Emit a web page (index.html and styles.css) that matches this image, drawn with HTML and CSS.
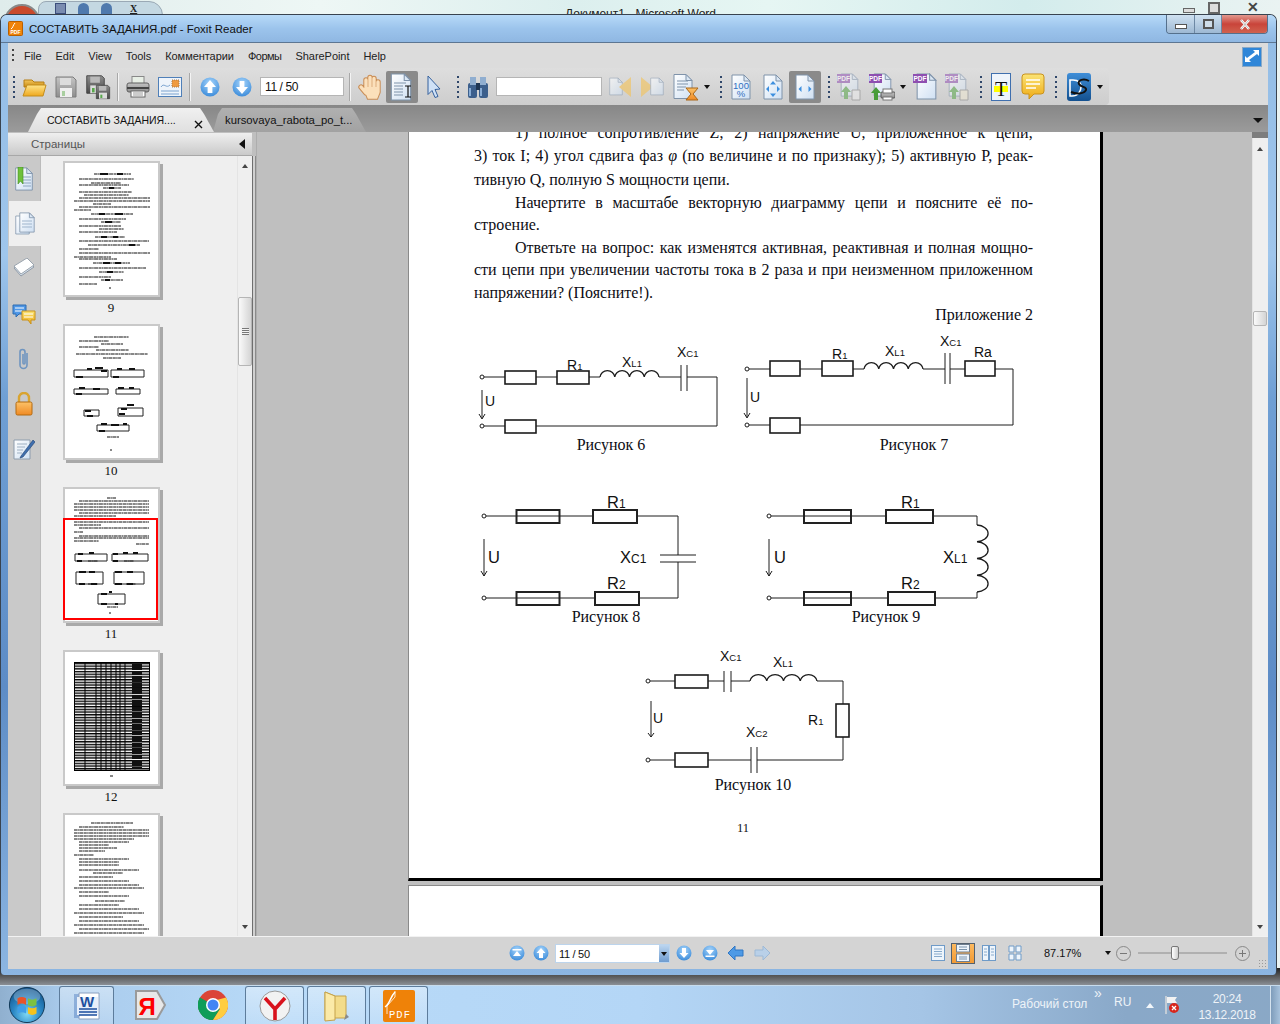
FILE: index.html
```html
<!DOCTYPE html>
<html lang="ru">
<head>
<meta charset="utf-8">
<title>Foxit Reader</title>
<link rel="stylesheet" href="styles.css">
</head>
<body>
<svg class="defs" width="0" height="0">
  <defs>
    <linearGradient id="gFold" x1="0" y1="0" x2="0" y2="1"><stop offset="0" stop-color="#ffe58a"/><stop offset="1" stop-color="#eea81e"/></linearGradient>
    <linearGradient id="gFoldB" x1="0" y1="0" x2="0" y2="1"><stop offset="0" stop-color="#f3c65a"/><stop offset="1" stop-color="#c98a12"/></linearGradient>
    <radialGradient id="gBlue" cx=".5" cy=".3" r=".8"><stop offset="0" stop-color="#a5d4fb"/><stop offset="1" stop-color="#2f83d6"/></radialGradient>
    <linearGradient id="gPage" x1="0" y1="0" x2="1" y2="1"><stop offset="0" stop-color="#fff"/><stop offset="1" stop-color="#cfe0f3"/></linearGradient>
    <linearGradient id="gGray" x1="0" y1="0" x2="0" y2="1"><stop offset="0" stop-color="#c4c4c4"/><stop offset="1" stop-color="#8e8e8e"/></linearGradient>
    <linearGradient id="gDark" x1="0" y1="0" x2="0" y2="1"><stop offset="0" stop-color="#8c8c8c"/><stop offset="1" stop-color="#4a4a4a"/></linearGradient>
    <linearGradient id="gYel" x1="0" y1="0" x2="0" y2="1"><stop offset="0" stop-color="#fbe476"/><stop offset="1" stop-color="#eea914"/></linearGradient>
    <linearGradient id="gOrange" x1="0" y1="0" x2="0" y2="1"><stop offset="0" stop-color="#fcc268"/><stop offset="1" stop-color="#f08a24"/></linearGradient>
    <radialGradient id="gOrb" cx=".5" cy=".75" r=".8"><stop offset="0" stop-color="#7fd9f5"/><stop offset=".5" stop-color="#2a86c4"/><stop offset="1" stop-color="#104a80"/></radialGradient>
    <linearGradient id="gDs" x1="0" y1="0" x2="0" y2="1"><stop offset="0" stop-color="#3f8ed8"/><stop offset="1" stop-color="#13508f"/></linearGradient>
    <pattern id="rows" width="76" height="2.7" patternUnits="userSpaceOnUse"><rect width="76" height="1.4" fill="#000"/></pattern>
    <symbol id="pg" viewBox="0 0 20 26"><path d="M1 1h12l6 6v18H1z" fill="url(#gPage)" stroke="#7f93aa"/><path d="M13 1v6h6z" fill="#dbe7f4" stroke="#7f93aa"/></symbol>
    <symbol id="floppy" viewBox="0 0 24 24"><path d="M2 2h17l3 3v17H2z" fill="url(#gGray)" stroke="#7c7c7c"/><rect x="6" y="3" width="11" height="7" fill="#dcdcdc"/><rect x="6" y="13" width="12" height="9" fill="#efefef"/><rect x="8" y="16" width="3" height="5" fill="#a9cfa0"/></symbol>
    <symbol id="floppyD" viewBox="0 0 24 24"><path d="M2 2h17l3 3v17H2z" fill="url(#gDark)" stroke="#3c3c3c"/><rect x="6" y="3" width="11" height="7" fill="#b9b9b9"/><rect x="6" y="13" width="12" height="9" fill="#dcdcdc"/><rect x="8" y="16" width="3" height="5" fill="#58a84c"/></symbol>
  </defs>
</svg>

<div class="desk">
  <div class="word-qat">
    <span class="qat-ico qat-save"></span><span class="qat-ico qat-undo"></span><span class="qat-ico qat-redo"></span><span class="qat-x">X</span>
  </div>
  <div class="word-title">Документ1 - Microsoft Word</div>
  <div class="word-ctl"><span class="wc-min"></span><span class="wc-max"></span><span class="wc-x">✕</span></div>
  <div class="word-orb"></div>
  <div class="word-status"></div>
</div>

<div class="win">
  <div class="titlebar">
    <svg class="app-ico" width="15" height="15" viewBox="0 0 15 15"><rect x=".5" y=".5" width="14" height="14" rx="1" fill="#ef8208" stroke="#b85f00"/><path d="M3 8c2-1 2-4 4-6" stroke="#fff" fill="none"/><text class="pdf-mini" x="7.5" y="12.5">PDF</text></svg>
    <span class="title-text">СОСТАВИТЬ ЗАДАНИЯ.pdf - Foxit Reader</span>
    <div class="caption">
      <span class="cap cap-min"><i></i></span>
      <span class="cap cap-max"><i></i></span>
      <span class="cap cap-close">
        <svg width="12" height="11" viewBox="0 0 12 11"><path d="M2 1l8 9M10 1l-8 9" stroke="#fff" stroke-width="2.6"/><path d="M2 1l8 9M10 1l-8 9" stroke="#555" stroke-width=".4"/></svg>
      </span>
    </div>
  </div>

  <div class="menubar">
    <span class="menu-grip"></span>
    <span>File</span><span>Edit</span><span>View</span><span>Tools</span><span>Комментарии</span><span class="m-tight">Формы</span><span>SharePoint</span><span>Help</span>
    <svg class="expand" width="20" height="20" viewBox="0 0 20 20"><rect x=".5" y=".5" width="19" height="19" fill="#2f86d8" stroke="#8aa9c6"/><path d="M11 3h6v6l-2-2-8 6 2 2H3v-6l2 2 8-6z" fill="#fff"/></svg>
  </div>

  <div class="toolbar-row">
    <div class="toolbar">
      <span class="grip grip-first"></span>
      <span class="tb"><svg width="25" height="24" viewBox="0 0 25 24"><path d="M2 5h8l2 2h10v5H2z" fill="url(#gFoldB)" stroke="#b67e14"/><path d="M5 10h19l-3 11H1z" fill="url(#gFold)" stroke="#c48d1c"/></svg></span>
      <span class="tb"><svg width="24" height="24"><use href="#floppy"/></svg></span>
      <span class="tb"><svg width="26" height="26" viewBox="0 0 26 26"><use href="#floppyD" width="21" height="21"/><g transform="translate(10 10)"><use href="#floppyD" width="16" height="16"/></g></svg></span>
      <span class="sep"></span>
      <span class="tb"><svg width="24" height="24" viewBox="0 0 24 24"><rect x="6" y="1.5" width="12" height="8" fill="#e8efe6" stroke="#888"/><rect x="1" y="8" width="22" height="9" rx="2" fill="url(#gGray)" stroke="#5e5e5e"/><rect x="1" y="12" width="22" height="2" fill="#444"/><rect x="5" y="16" width="14" height="6" fill="#fff" stroke="#666"/><path d="M7 18h10M7 20h10" stroke="#999"/></svg></span>
      <span class="tb"><svg width="24" height="20" viewBox="0 0 24 20"><rect x=".5" y=".5" width="23" height="19" fill="#eef4fb" stroke="#4f7fb8"/><rect x="14" y="3" width="7" height="7" fill="#ef9a40" stroke="#a97a4a" stroke-dasharray="1 1"/><path d="M3 10c3-5 5 2 9-2M3 14h18M3 17h18" stroke="#7aa3d0" fill="none"/></svg></span>
      <span class="sep"></span>
      <span class="tb"><svg width="20" height="20" viewBox="0 0 20 20"><circle cx="10" cy="10" r="9.5" fill="url(#gBlue)"/><path d="M10 3l6 7h-3.6v6H7.6v-6H4z" fill="#fff"/></svg></span>
      <span class="tb"><svg width="20" height="20" viewBox="0 0 20 20"><circle cx="10" cy="10" r="9.5" fill="url(#gBlue)"/><path d="M10 17l-6-7h3.6V4h4.8v6H16z" fill="#fff"/></svg></span>
      <span class="page-input tb-input">11 / 50</span>
      <span class="sep"></span>
      <span class="tb"><svg width="24" height="26" viewBox="0 0 24 26"><g fill="none" stroke-linecap="round"><g stroke="#c98d55" stroke-width="5.4"><path d="M3 13l5 6M8 18V6M12 17V3.5M16 17V4.5M20 18V8M9 18l2 5h7l2-5"/></g><g stroke="#fbe0bb" stroke-width="3.4"><path d="M3 13l5 6M8 18V6M12 17V3.5M16 17V4.5M20 18V8M9 18l2 5h7l2-5"/></g></g><path d="M8 13h12v8l-3 3h-6l-3-4z" fill="#fbe0bb"/></svg></span>
      <span class="tb tb-on"><svg width="24" height="28" viewBox="0 0 24 28"><use href="#pg" width="22" height="28"/><path d="M4 10h12M4 13h9M4 16h9M4 19h9M4 22h9" stroke="#7f93aa"/><path d="M15 13h6M15 24h6M18 13v11" stroke="#111" stroke-width="1.2"/></svg></span>
      <span class="tb"><svg width="18" height="24" viewBox="0 0 18 24"><path d="M3 1l12 13-5 .5 3 7-3 1-3-7-4 4z" fill="#cfe1f6" stroke="#35609c"/></svg></span>
      <span class="grip"></span>
      <span class="tb"><svg width="24" height="24" viewBox="0 0 24 24"><rect x="2" y="8" width="9" height="15" rx="2" fill="#3c5f8c"/><rect x="13" y="8" width="9" height="15" rx="2" fill="#3c5f8c"/><rect x="4" y="2" width="6" height="8" fill="#90aed0"/><rect x="14" y="2" width="6" height="8" fill="#90aed0"/><rect x="10" y="8" width="4" height="7" fill="#1e3553"/><path d="M4 13v8M15 13v8" stroke="#9cc0e8" stroke-width="1.6"/></svg></span>
      <span class="search-input tb-input"></span>
      <span class="tb tb-l"><svg class="faded" width="24" height="22" viewBox="0 0 24 22"><use href="#pg" x="1" y="1" width="14" height="19"/><path d="M23 1v20L11 11z" fill="#f4c35a"/></svg></span>
      <span class="tb"><svg class="faded" width="24" height="22" viewBox="0 0 24 22"><path d="M1 1v20l12-10z" fill="#f4c35a"/><use href="#pg" x="10" y="1" width="14" height="19"/></svg></span>
      <span class="tb tb-l"><svg width="26" height="28" viewBox="0 0 26 28"><use href="#pg" width="20" height="27"/><path d="M4 8h11M4 11h11M4 14h9M4 17h7" stroke="#7f93aa"/><path d="M13 15h12l-5 6 5 6H13l5-6z" fill="url(#gOrange)" stroke="#a96618"/></svg></span>
      <span class="drop"></span>
      <span class="grip"></span>
      <span class="tb"><svg width="20" height="26" viewBox="0 0 20 26"><use href="#pg" width="20" height="26"/><text class="ico-num" x="10" y="14.5">100</text><text class="ico-num" x="10" y="23">%</text></svg></span>
      <span class="tb"><svg width="20" height="26" viewBox="0 0 20 26"><use href="#pg" width="20" height="26"/><path d="M10 7l3 3.5H7zM10 23l3-3.5H7zM3 15l3-3v6zM17 15l-3-3v6z" fill="#3d8fdf"/></svg></span>
      <span class="tb tb-on"><svg width="20" height="26" viewBox="0 0 20 26"><use href="#pg" width="20" height="26"/><path d="M3.5 15l3-3v6zM16.500 15l-3-3v6z" fill="#3d8fdf"/></svg></span>
      <span class="grip"></span>
      <span class="tb"><svg class="faded2" width="24" height="28" viewBox="0 0 24 28"><use href="#pg" x="3" width="19" height="24"/><rect y="1" width="13" height="9" fill="#8e4fb0"/><text class="pdf-tag" x="6.500" y="8">PDF</text><path d="M9 13l5 6h-3v7H7v-7H4z" fill="#58a64a"/><path d="M15 17h8v10h-8z" fill="#eee" stroke="#888"/></svg></span>
      <span class="tb tb-s"><svg width="26" height="28" viewBox="0 0 26 28"><use href="#pg" x="4" width="19" height="24"/><rect y="1" width="13" height="9" fill="#8e4fb0"/><text class="pdf-tag" x="6.500" y="8">PDF</text><path d="M7 14l5 6H9v7H5v-7H2z" fill="#4a9c3a"/><rect x="12" y="19" width="14" height="6" rx="1" fill="url(#gGray)" stroke="#555"/><rect x="14" y="16" width="9" height="4" fill="#fff" stroke="#777"/><rect x="14" y="24" width="9" height="3" fill="#fff" stroke="#777"/></svg></span>
      <span class="drop"></span>
      <span class="tb"><svg width="24" height="28" viewBox="0 0 24 28"><use href="#pg" x="3" width="21" height="27"/><rect y="1" width="14" height="9" fill="#8e4fb0"/><text class="pdf-tag" x="7" y="8">PDF</text></svg></span>
      <span class="tb"><svg class="faded2" width="24" height="28" viewBox="0 0 24 28"><use href="#pg" x="3" width="19" height="24"/><rect y="1" width="13" height="9" fill="#8e4fb0"/><text class="pdf-tag" x="6.500" y="8">PDF</text><path d="M9 13l5 6h-3v7H7v-7H4z" fill="#58a64a"/><path d="M15 17h8v10h-8z" fill="#efe8d2" stroke="#888"/></svg></span>
      <span class="grip"></span>
      <span class="tb"><svg width="20" height="28" viewBox="0 0 20 28"><rect x=".5" y=".5" width="19" height="27" fill="#eef4fb" stroke="#3f6fae"/><rect x="3" y="13" width="14" height="6" fill="#ffff00"/><text class="ico-t" x="10" y="23">T</text></svg></span>
      <span class="tb"><svg width="24" height="27" viewBox="0 0 24 27"><path d="M4 1h16a3 3 0 0 1 3 3v14a3 3 0 0 1-3 3h-7l-5 5v-5H4a3 3 0 0 1-3-3V4a3 3 0 0 1 3-3z" fill="url(#gYel)" stroke="#c9921c"/><path d="M5 7h14M5 11h14M5 15h10" stroke="#fff" stroke-width="1.3"/></svg></span>
      <span class="grip grip-ds"></span>
      <span class="tb tb-ds"><svg width="24" height="28" viewBox="0 0 24 28"><rect width="24" height="28" rx="3" fill="url(#gDs)"/><path d="M3 7h3c6 0 8 3 8 7s-3 9-9 9H3z" fill="none" stroke="#fff" stroke-width="1.6"/><path d="M22 8c-5-3-12-1-10 3s8 2 7 6c-1 3-8 5-15 2" fill="none" stroke="#111" stroke-width="2"/></svg></span>
      <span class="drop"></span>
    </div>
  </div>

  <div class="tabstrip">
    <div class="tab tab-on"><span class="tab-label">СОСТАВИТЬ ЗАДАНИЯ....</span><svg class="tab-x" width="9" height="9" viewBox="0 0 9 9"><path d="M1 1l7 7M8 1L1 8" stroke="#111" stroke-width="1.4"/></svg></div>
    <div class="tab tab-off"><span class="tab-label">kursovaya_rabota_po_t...</span></div>
    <span class="tab-drop"></span>
  </div>

  <div class="content">
    <aside class="sidebar">
      <div class="side-head"><span class="side-title">Страницы</span><span class="tri-left"></span></div>
      <div class="side-body">
        <div class="rail">
          <div class="rail-item"><svg width="20" height="24" viewBox="0 0 20 24"><use href="#pg" width="20" height="24"/><path d="M9 10h8M9 13h8M9 16h8M9 19h8" stroke="#8fa6c0"/><path d="M4 0h5v17l-2.500-3L4 17z" fill="#6fc03c" stroke="#3f8a20" stroke-width=".6"/></svg></div>
          <div class="rail-item rail-on"><svg width="20" height="24" viewBox="0 0 20 24"><use href="#pg" y="3" width="15" height="20"/><use href="#pg" x="4" width="16" height="21"/><path d="M7 9h10M7 12h10M7 15h10" stroke="#9fb5cc"/></svg></div>
          <div class="rail-item"><svg width="22" height="22" viewBox="0 0 22 22"><path d="M1 10l13-8 7 7-13 9z" fill="#d8e4ef" stroke="#909aa6"/><path d="M1 8l13-8 7 7-13 9z" fill="#fff" stroke="#9aa4ae"/></svg></div>
          <div class="rail-item"><svg width="24" height="22" viewBox="0 0 24 22"><path d="M1 2h13v9H7l-3 3v-3H1z" fill="#4f97e6" stroke="#2e6cb0"/><path d="M3 5h9M3 8h7" stroke="#fff"/><path d="M10 8h13v9h-4v4l-3-4h-6z" fill="url(#gYel)" stroke="#c9921c"/><path d="M12 11h9M12 14h9" stroke="#fff"/></svg></div>
          <div class="rail-item"><svg width="14" height="24" viewBox="0 0 14 24"><path d="M10 6v12a3.500 3.500 0 0 1-7 0V5a2.500 2.500 0 0 1 5 0v11a1 1 0 0 1-2 0V7" fill="none" stroke="#6f95c0" stroke-width="1.6"/></svg></div>
          <div class="rail-item"><svg width="18" height="24" viewBox="0 0 18 24"><path d="M4 10V6a5 5 0 0 1 10 0v4" fill="none" stroke="#d9a430" stroke-width="2.400"/><rect x="1" y="10" width="16" height="13" rx="1.500" fill="url(#gOrange)" stroke="#b36a10"/></svg></div>
          <div class="rail-item"><svg width="22" height="23" viewBox="0 0 22 23"><path d="M1 3h16v19H1z" fill="url(#gPage)" stroke="#8d9cad"/><path d="M4 7h10M4 10h8M4 13h6M4 16h5" stroke="#9fb0c2"/><path d="M8 19L20 3l2 2-12 15-3 1z" fill="#3f6fae" stroke="#1f3f70" stroke-width=".6"/></svg></div>
        </div>
        <div class="thumbs">
          <div class="thumb-wrap">
            <div class="thumb"><svg class="thumb-art" viewBox="0 0 93 132"><path class="tl" d="M29 11h37M14 16h55M26 20h30M14 22h50M38 25h18M14 29h53M19 32h45M14 35h71M9 38h76M28 41h18M14 44h71M9 47h17M26 51h42M14 56h47M36 59h20M14 63h42M34 66h25M14 69h38M30 74h30M14 78h70M23 82h52M14 86h20M14 90h71M9 94h37M14 96h38M28 100h37M14 105h67M34 109h25M14 114h32M36 117h22M14 121h18M44 125h2"/><path class="th" d="M35 11h8M52 11h6M44 25h5M34 51h6M50 51h8M40 59h7M36 74h6M48 74h5M64 82h6M38 100h7M50 100h6M42 109h6M40 117h5"/></svg></div>
            <div class="thumb-no">9</div>
          </div>
          <div class="thumb-wrap">
            <div class="thumb"><svg class="thumb-art" viewBox="0 0 93 132"><path class="tl" d="M29 11h35M14 15h30M36 18h22M14 21h20M31 24h33M11 28h72M38 32h18M42 111h12M45 124h2"/><path class="tc" d="M9 44h34v7H9zM46 44h33v7H46zM9 63h34v5H9zM51 63h24v5H51zM19 84h15v6H19zM53 82h25v8H53zM32 99h32v6H32z"/><path class="th" d="M11 51h7M22 43h5M30 42h8M36 45h6M48 51h6M52 43h5M64 43h6M11 68h6M14 62h6M28 63h7M53 62h6M64 62h5M20 85h6M22 90h6M54 88h6M62 79h7M56 83h6M34 105h6M36 98h6M46 99h8M58 98h4"/></svg></div>
            <div class="thumb-no">10</div>
          </div>
          <div class="thumb-wrap">
            <div class="thumb"><svg class="thumb-art" viewBox="0 0 93 132"><path class="tl" d="M42 9h9M14 12h70M9 15h75M9 18h75M9 21h75M14 24h70M9 27h42M9 33h75M9 36h27M14 39h70M9 43h9M14 47h70M9 49h75M9 52h25M71 55h13M23 72h10M59 72h10M23 95h10M61 95h10M42 118h11M44 124h2"/><path class="tc" d="M10 65h32v7H10zM47 65h36v7H47zM11 83h27v12H11zM49 83h30v12H49zM33 105h27v10H33z"/><path class="th" d="M13 65h5M24 64h5M12 72h5M48 65h5M58 64h5M68 64h5M48 72h5M14 83h7M24 83h6M14 95h6M26 95h6M50 83h7M62 83h6M50 95h7M62 95h6M36 105h6M44 103h3M36 115h6M50 115h3"/></svg></div>
            <div class="marker"></div>
            <div class="thumb-no">11</div>
          </div>
          <div class="thumb-wrap">
            <div class="thumb"><svg class="thumb-art" viewBox="0 0 93 132"><rect x="9" y="10" width="76" height="109" fill="url(#rows)"/><rect x="9.500" y="10.500" width="75" height="108" class="tb-grid"/><path class="tb-grid" d="M20 10v109M31 10v109M36 10v109M41 10v109M46 10v109M51 10v109M55 10v109M60 10v109"/><path class="tb-blk" d="M72 12v105"/><path class="tl" d="M45 124h3"/></svg></div>
            <div class="thumb-no">12</div>
          </div>
          <div class="thumb-wrap">
            <div class="thumb"><svg class="thumb-art" viewBox="0 0 93 132"><path class="tl" d="M26 8h42M14 12h45M9 15h75M9 18h75M9 21h75M9 24h60M14 27h50M14 30h30M14 33h38M14 36h26M9 40h20M14 44h50M14 47h40M14 50h40M14 55h60M28 58h30M14 62h34M14 66h50M14 70h60M9 73h70M14 77h30M14 81h50M30 86h30M14 90h40M14 94h60M9 98h70M14 102h44M14 106h60M9 110h70M14 114h70M9 118h70"/></svg></div>
          </div>
        </div>
        <div class="sc side-sc">
          <span class="ar-up"></span>
          <span class="sc-thumb sc-thumb-side"><i></i></span>
          <span class="ar-dn"></span>
        </div>
        <div class="side-edge"></div>
      </div>
    </aside>

    <main class="doc">
      <article class="page">
        <div class="textblock">
          <div class="ln ln-in">1) полное сопротивление Z; 2) напряжение U, приложенное к цепи;</div>
          <div class="ln">3) ток I; 4) угол сдвига фаз <em>φ</em> (по величине и по признаку); 5) активную P, реак-</div>
          <div class="ln ln-last ln-gap">тивную Q, полную S мощности цепи.</div>
          <div class="ln ln-in">Начертите в масштабе векторную диаграмму цепи и поясните её по-</div>
          <div class="ln ln-last">строение.</div>
          <div class="ln ln-in">Ответьте на вопрос: как изменятся активная, реактивная и полная мощно-</div>
          <div class="ln">сти цепи при увеличении частоты тока в 2 раза и при неизменном приложенном</div>
          <div class="ln ln-last">напряжении? (Поясните!).</div>
          <div class="ln ln-right">Приложение 2</div>
        </div>
        <svg class="figures" width="692" height="520" viewBox="408 326 692 520">
          <!-- Рисунок 6 -->
          <g class="w">
            <path d="M484 377h21M536 377h21M589 377h11M659 377h22M687 377h30v49H484"/>
            <path class="bold" d="M600 377a7.400 7 0 0 1 14.750 0a7.400 7 0 0 1 14.750 0a7.400 7 0 0 1 14.750 0a7.400 7 0 0 1 14.750 0"/>
            <rect class="b" x="505" y="371" width="31" height="13"/><rect class="b" x="557" y="371" width="32" height="13"/><rect class="b" x="505" y="420" width="31" height="13"/>
            <path d="M681 365v26M687 365v26"/>
            <circle class="t" cx="482" cy="377" r="2"/><circle class="t" cx="482" cy="426" r="2"/>
            <path d="M482 390v28M479 414l3 5 3-5"/>
          </g>
          <text class="s" x="485" y="406">U</text>
          <text class="s" x="567" y="370">R<tspan class="sub">1</tspan></text>
          <text class="s" x="622" y="367">X<tspan class="sub">L1</tspan></text>
          <text class="s" x="677" y="357">X<tspan class="sub">C1</tspan></text>
          <text class="cap-t" x="611" y="450">Рисунок 6</text>

          <!-- Рисунок 7 -->
          <g class="w">
            <path d="M749 369h21M800 369h22M853 369h11M923 369h22M950 369h15M995 369h18v56H749"/>
            <path class="bold" d="M864 369a7.400 7 0 0 1 14.750 0a7.400 7 0 0 1 14.750 0a7.400 7 0 0 1 14.750 0a7.400 7 0 0 1 14.750 0"/>
            <rect class="b" x="770" y="361" width="30" height="15"/><rect class="b" x="822" y="361" width="31" height="15"/><rect class="b" x="965" y="361" width="30" height="15"/><rect class="b" x="770" y="418" width="30" height="15"/>
            <path d="M945 353v31M950 353v31"/>
            <circle class="t" cx="747" cy="369" r="2"/><circle class="t" cx="747" cy="425" r="2"/>
            <path d="M747 378v39M744 413l3 5 3-5"/>
          </g>
          <text class="s" x="750" y="402">U</text>
          <text class="s" x="832" y="359">R<tspan class="sub">1</tspan></text>
          <text class="s" x="885" y="356">X<tspan class="sub">L1</tspan></text>
          <text class="s" x="940" y="346">X<tspan class="sub">C1</tspan></text>
          <text class="s" x="974" y="357">Ra</text>
          <text class="cap-t" x="914" y="450">Рисунок 7</text>

          <!-- Рисунок 8 -->
          <g class="w">
            <path d="M486 516h30M560 516h33M637 516h41v39M678 562v36h-39M595 598h-35M516 598h-30"/>
            <rect class="b2" x="516.500" y="510" width="43" height="13"/><path d="M517 516h42"/>
            <rect class="b2" x="593" y="510" width="44" height="13"/>
            <rect class="b2" x="516.500" y="592" width="43" height="13"/><path d="M517 598h42"/>
            <rect class="b2" x="595" y="592" width="44" height="13"/>
            <path d="M660 555h36M660 562h36"/>
            <circle class="t" cx="484" cy="516" r="2"/><circle class="t" cx="484" cy="598" r="2"/>
            <path d="M484 539v37M481 571l3 5 3-5"/>
          </g>
          <text class="l" x="488" y="563">U</text>
          <text class="l" x="620" y="563">X<tspan class="sub2">C1</tspan></text>
          <text class="l" x="607" y="508">R<tspan class="sub2">1</tspan></text>
          <text class="l" x="607" y="589">R<tspan class="sub2">2</tspan></text>
          <text class="cap-t" x="606" y="622">Рисунок 8</text>

          <!-- Рисунок 9 -->
          <g class="w">
            <path d="M771 516h33M851 516h35M933 516h44v9M977 592v6h-42M888 598h-37M804 598h-33"/>
            <path d="M977 525a12 8.400 0 0 1 0 16.750a12 8.400 0 0 1 0 16.750a12 8.400 0 0 1 0 16.750a12 8.400 0 0 1 0 16.750" class="bold"/>
            <rect class="b2" x="804" y="510" width="47" height="13"/><path d="M804 516h47"/>
            <rect class="b2" x="886" y="510" width="47" height="13"/>
            <rect class="b2" x="804" y="592" width="47" height="13"/><path d="M804 598h47"/>
            <rect class="b2" x="888" y="592" width="47" height="13"/>
            <circle class="t" cx="769" cy="516" r="2"/><circle class="t" cx="769" cy="598" r="2"/>
            <path d="M769 539v37M766 571l3 5 3-5"/>
          </g>
          <text class="l" x="774" y="563">U</text>
          <text class="l" x="943" y="563">X<tspan class="sub2">L1</tspan></text>
          <text class="l" x="901" y="508">R<tspan class="sub2">1</tspan></text>
          <text class="l" x="901" y="589">R<tspan class="sub2">2</tspan></text>
          <text class="cap-t" x="886" y="622">Рисунок 9</text>

          <!-- Рисунок 10 -->
          <g class="w">
            <path d="M650 681h25M708 681h16M731 681h19M817 681h26v23M843 737v23h-86M751 760h-43M675 760h-25"/>
            <path class="bold" d="M750 681a8.400 7 0 0 1 16.750 0a8.400 7 0 0 1 16.750 0a8.400 7 0 0 1 16.750 0a8.400 7 0 0 1 16.750 0"/>
            <rect class="b" x="675" y="675" width="33" height="13"/>
            <rect class="b" x="836" y="704" width="13" height="33"/>
            <rect class="b" x="675" y="753" width="33" height="14"/>
            <path d="M724 671v21M731 671v21M751 747v26M757 747v26"/>
            <circle class="t" cx="648" cy="681" r="2"/><circle class="t" cx="648" cy="760" r="2"/>
            <path d="M651 701v36M648 733l3 4 3-4"/>
          </g>
          <text class="s" x="653" y="723">U</text>
          <text class="s" x="720" y="661">X<tspan class="sub">C1</tspan></text>
          <text class="s" x="773" y="667">X<tspan class="sub">L1</tspan></text>
          <text class="s" x="746" y="737">X<tspan class="sub">C2</tspan></text>
          <text class="s" x="808" y="725">R<tspan class="sub">1</tspan></text>
          <text class="cap-t" x="753" y="790">Рисунок 10</text>

          <text class="num-t" x="743" y="832">11</text>
        </svg>
      </article>
      <article class="page page-next"></article>
    </main>

    <div class="sc doc-sc">
      <span class="sc-cap"></span>
      <span class="ar-up"></span>
      <span class="sc-thumb sc-thumb-doc"></span>
      <span class="ar-dn"></span>
    </div>
  </div>

  <footer class="status">
    <span class="st-btn"><svg width="16" height="16" viewBox="0 0 16 16"><circle cx="8" cy="8" r="7.500" fill="url(#gBlue)"/><path d="M3.500 4h9v1.500h-9zM8 6l4 5H4z" fill="#fff"/></svg></span>
    <span class="st-btn"><svg width="16" height="16" viewBox="0 0 16 16"><circle cx="8" cy="8" r="7.500" fill="url(#gBlue)"/><path d="M8 3l4.500 5H10v5H6V8H3.500z" fill="#fff"/></svg></span>
    <span class="st-input"><span class="st-val">11 / 50</span><span class="st-arrow"></span></span>
    <span class="st-btn st-down"><svg width="16" height="16" viewBox="0 0 16 16"><circle cx="8" cy="8" r="7.500" fill="url(#gBlue)"/><path d="M8 13l4.500-5H10V3H6v5H3.500z" fill="#fff"/></svg></span>
    <span class="st-btn st-end"><svg width="16" height="16" viewBox="0 0 16 16"><circle cx="8" cy="8" r="7.500" fill="url(#gBlue)"/><path d="M3.500 10.500h9V12h-9zM8 10L4 5h8z" fill="#fff"/></svg></span>
    <span class="st-btn st-back"><svg width="17" height="16" viewBox="0 0 17 16"><path d="M8 1v4h8v6H8v4L1 8z" fill="#4d9ae6" stroke="#2f76c4"/></svg></span>
    <span class="st-btn st-fwd"><svg width="17" height="16" viewBox="0 0 17 16"><path d="M9 1v4H1v6h8v4l7-7z" fill="#b9d0e8" stroke="#9db9d6"/></svg></span>
    <span class="st-view st-v1"><svg width="14" height="16" viewBox="0 0 14 16"><rect x=".5" y=".5" width="13" height="15" fill="#eef5fc" stroke="#6f9bc8"/><path d="M3 4h8M3 6.500h8M3 9h8M3 11.500h8" stroke="#88aacc"/></svg></span>
    <span class="st-view st-on"><svg width="14" height="18" viewBox="0 0 14 18"><rect x=".5" y=".5" width="13" height="7.500" fill="#eef5fc" stroke="#6f7f90"/><rect x=".5" y="10" width="13" height="7.500" fill="#eef5fc" stroke="#6f7f90"/><path d="M3 3h8M3 5.500h8M3 13h8M3 15h8" stroke="#7a93ab"/></svg></span>
    <span class="st-view"><svg width="14" height="16" viewBox="0 0 14 16"><rect x=".5" y=".5" width="6" height="15" fill="#eef5fc" stroke="#6f9bc8"/><rect x="7.500" y=".5" width="6" height="15" fill="#eef5fc" stroke="#6f9bc8"/><path d="M2 4h3M2 7h3M2 10h3M9 4h3M9 7h3M9 10h3" stroke="#88aacc"/></svg></span>
    <span class="st-view"><svg width="14" height="16" viewBox="0 0 14 16"><path d="M1 1h5v6H1zM8 1h5v6H8zM1 9h5v6H1zM8 9h5v6H8z" fill="#eef5fc" stroke="#6f9bc8"/></svg></span>
    <span class="zoom-val">87.17%</span>
    <span class="drop drop-z"></span>
    <span class="zoom-c"><svg width="15" height="15" viewBox="0 0 15 15"><circle cx="7.500" cy="7.500" r="7" fill="none" stroke="#888"/><path d="M4 7.500h7" stroke="#777"/></svg></span>
    <span class="slider"><i></i></span>
    <span class="zoom-c"><svg width="15" height="15" viewBox="0 0 15 15"><circle cx="7.500" cy="7.500" r="7" fill="none" stroke="#888"/><path d="M4 7.500h7M7.500 4v7" stroke="#777"/></svg></span>
    <span class="st-grip"></span>
  </footer>
</div>

<nav class="taskbar">
  <div class="tk-orb"><svg width="38" height="38" viewBox="0 0 40 40"><circle cx="20" cy="20" r="18.500" fill="url(#gOrb)" stroke="#0e3552"/><ellipse cx="20" cy="11" rx="14" ry="8" fill="#fff" opacity=".25"/><path d="M10 13c3-2 6-2 9 0v7c-3-2-6-2-9 0z" fill="#e8542a"/><path d="M21 13c3 2 6 2 9 0v7c-3 2-6 2-9 0z" fill="#7cc142"/><path d="M10 22c3-2 6-2 9 0v7c-3-2-6-2-9 0z" fill="#3f9ee8"/><path d="M21 22c3 2 6 2 9 0v7c-3 2-6 2-9 0z" fill="#f6c21c"/></svg></div>
  <div class="tk-btn tk-word"><svg width="32" height="32" viewBox="0 0 32 32"><path d="M3 4h22v24H3z" fill="#2a5fb0" opacity=".35"/><path d="M8 3h20v26H8z" fill="#fff" stroke="#8aa0c0"/><rect x="6" y="7" width="21" height="18" fill="#e7effa"/><text class="word-w" x="16" y="17">W</text><path d="M8 19h18M8 22h18M8 25h18" stroke="#1d4f9e" stroke-width="1.600"/></svg></div>
  <div class="tk-pin tk-pin-y"><svg width="32" height="32" viewBox="0 0 32 32"><path d="M2 2h21l8 14-8 14H2z" fill="#e8e8e8" stroke="#9a9a9a" stroke-width="2"/><text class="ya" x="13" y="26">Я</text></svg></div>
  <div class="tk-pin tk-pin-c"><svg width="30" height="30" viewBox="0 0 30 30"><circle cx="15" cy="15" r="15" fill="#db4437"/><path d="M15 30A15 15 0 0 1 2 7.500L9 19z" fill="#0f9d58"/><path d="M2 7.500A15 15 0 0 0 15 30l7-11z" fill="#0f9d58"/><path d="M28 7.500A15 15 0 0 1 15 30l7-11-7-8z" fill="#ffcd40"/><circle cx="15" cy="15" r="7" fill="#fff"/><circle cx="15" cy="15" r="5.500" fill="#4285f4"/></svg></div>
  <div class="tk-btn tk-w"><svg width="32" height="32" viewBox="0 0 32 32"><circle cx="16" cy="16" r="15" fill="#f2f2f2" stroke="#999"/><path d="M6 8l10 11 10-11M16 18v12" fill="none" stroke="#d8121c" stroke-width="3.600"/></svg></div>
  <div class="tk-btn tk-w"><svg width="26" height="32" viewBox="0 0 26 32"><path d="M1 2l10 4h11v22H10L1 30z" fill="#f3dc8a" stroke="#c4a24a"/><path d="M1 2l10 4v24l-10 1z" fill="#fbeaa8" stroke="#c4a24a"/><path d="M22 24l3 3-5 3" fill="#8a8a8a"/></svg></div>
  <div class="tk-btn tk-w"><svg width="32" height="32" viewBox="0 0 32 32"><rect width="32" height="32" rx="2" fill="#ef8208"/><path d="M2 17c5-3 5-10 10-15" fill="none" stroke="#fff" stroke-width="1.400"/><path d="M12 1v6l-8 9v8" fill="none" stroke="#fff" stroke-width=".8"/><text class="pdf-big" x="17" y="28">PDF</text></svg></div>
  <div class="tray">
    <span class="tray-desk">Рабочий стол</span>
    <span class="tray-more">»</span>
    <span class="tray-lang">RU</span>
    <span class="tray-up"></span>
    <svg class="tray-flag" width="16" height="20" viewBox="0 0 16 20"><path d="M2 1v18" stroke="#ddd" stroke-width="1.400"/><path d="M3 2h10l-2 3 2 3H3z" fill="#f2f2f2"/><circle cx="10" cy="13" r="5" fill="#d8261c"/><path d="M8 11l4 4M12 11l-4 4" stroke="#fff" stroke-width="1.300"/></svg>
    <span class="clock"><span>20:24</span><span>13.12.2018</span></span>
    <span class="show-desk"></span>
  </div>
</nav>
</body>
</html>
```

FILE: styles.css
```css
* { box-sizing: border-box; }
html, body { margin: 0; padding: 0; }
body {
  width: 1280px; height: 1024px; overflow: hidden; position: relative;
  display: flex; flex-direction: column;
  font-family: "Liberation Sans", Arial, sans-serif; font-size: 11px; color: #111;
  background: #cfe3e8;
}
.defs { position: absolute; }
svg { display: block; flex: none; }

/* ---------- desktop behind ---------- */
.desk {
  flex: 1; position: relative; overflow: hidden;
  background: linear-gradient(90deg, #dfeceb 0, #eef7f5 25%, #dcefee 45%, #e6f6f3 60%, #d3ecec 80%, #eaf3f2 100%);
}
.word-qat {
  position: absolute; left: 38px; top: 1px; width: 125px; height: 16px;
  border: 1px solid #9aa9b5; border-radius: 8px 14px 0 0; background: #c4d8e2;
  display: flex; gap: 12px; padding: 1px 0 0 16px;
}
.qat-ico { width: 11px; height: 11px; background: #5a76a6; }
.qat-save { background: #7a8cb0; border: 1px solid #3c4e7c; }
.qat-undo, .qat-redo { background: #4f79ad; border-radius: 6px 6px 0 0; }
.qat-x { font: bold 10px "Liberation Serif", serif; text-decoration: underline; color: #222; margin-left: 6px; }
.word-title { position: absolute; left: 565px; top: 7px; font-size: 12px; color: #222; white-space: nowrap; }
.word-ctl { position: absolute; left: 1175px; top: 0; width: 90px; height: 14px; }
.word-ctl span { position: absolute; }
.wc-min { left: 8px; top: 8px; width: 12px; height: 5px; border: 1px solid #666; background: #ddd; }
.wc-max { left: 33px; top: 2px; width: 12px; height: 12px; border: 2px solid #666; background: #ddd; }
.wc-x { left: 72px; top: -1px; font-size: 14px; color: #444; font-weight: bold; }
.word-orb { position: absolute; left: 4px; top: 4px; width: 36px; height: 36px; border-radius: 50%; background: #c9492c; border: 2px solid #888; }
.word-status { position: absolute; left: 0; right: 0; top: 968px; height: 17px; background: linear-gradient(#222 0, #555 45%, #8a8f95 100%); }

/* ---------- window ---------- */
.win {
  position: absolute; left: 0; top: 14px; width: 1277px; height: 961px;
  display: flex; flex-direction: column; padding: 0 8px 6px 7px;
  border: 1px solid #39434f; border-bottom: 0; border-radius: 7px 7px 4px 4px;
  background: linear-gradient(180deg, #bcdcf6 0, #94bde6 3%, #9fc6ec 25%, #6f9fd4 40%, #5d8cc6 70%, #8cb6e2 100%);
}
.titlebar {
  margin: 0 -8px 0 -7px; height: 28px; flex: none; padding: 0 0 0 7px;
  display: flex; align-items: center; position: relative;
  background: linear-gradient(180deg, #b7daf8 0, #9cc4ec 50%, #8fb7e2 100%);
  border-bottom: 1px solid #5d7692; border-radius: 6px 6px 0 0;
}
.title-text { margin-left: 6px; font-size: 11.500px; color: #111; white-space: nowrap; }
.caption {
  position: absolute; left: 1165px; top: 0; width: 102px; height: 19px; display: flex;
  border: 1px solid #55708c; border-top: 0; border-radius: 0 0 4px 4px; overflow: hidden;
}
.cap { height: 18px; display: flex; align-items: center; justify-content: center; border-right: 1px solid #6d88a4; }
.cap-min { width: 28px; background: linear-gradient(#cfe1f1, #9db8d3); }
.cap-max { width: 27px; background: linear-gradient(#cfe1f1, #9db8d3); }
.cap-close { flex: 1; background: linear-gradient(#e2988e, #c9443a 50%, #d0624f); border: 0; }
.cap-min i { width: 12px; height: 5px; margin-top: 5px; border: 1px solid #555; background: #fff; }
.cap-max i { width: 11px; height: 10px; border: 2px solid #555; background: #cfdde9; }

.menubar {
  height: 25px; flex: none; display: flex; align-items: center; gap: 14px; background: #dcdcdc;
  padding-left: 16px; position: relative; color: #222; letter-spacing: -.05px;
}
.m-tight { letter-spacing: -.5px; }
.menu-grip {
  position: absolute; left: 4px; top: 6px; height: 14px; width: 2px;
  background: repeating-linear-gradient(#444 0 2px, transparent 2px 5px);
}
.expand { margin-left: auto; margin-right: 6px; margin-top: 3px; }

.toolbar-row { height: 37px; flex: none; background: #dcdcdc; display: flex; }
.toolbar {
  width: 1101px; height: 37px; display: flex; align-items: center;
  background: linear-gradient(#dedede, #cdcdcd); border-radius: 0 4px 4px 0;
}
.grip { width: 12px; height: 32px; position: relative; flex: none; }
.grip::before {
  content: ""; position: absolute; left: 7px; top: 5px; height: 24px; width: 2px;
  background: repeating-linear-gradient(#30476a 0 2px, transparent 2px 5px);
}
.grip-first { margin-left: -2px; }
.grip-ds { margin-left: -1px; }
.tb { width: 32px; height: 32px; display: flex; align-items: center; justify-content: center; flex: none; }
.tb-on { background: #8a8a8a; border-radius: 2px; }
.tb-l { margin-left: 2px; }
.tb-s { margin-left: 1px; }
.tb-ds { margin-left: 3px; }
.sep { width: 8px; height: 30px; position: relative; flex: none; }
.sep::before { content: ""; position: absolute; left: 3px; top: 1px; width: 2px; height: 28px; background: linear-gradient(90deg, #a8a8a8 50%, #f4f4f4 50%); }
.tb-input { background: #fff; border: 1px solid #b5b5b5; height: 19px; flex: none; }
.page-input { width: 84px; margin: 0 2px; padding: 2px 0 0 4px; font: 12px/14px "Liberation Sans", sans-serif; letter-spacing: -.4px; color: #111; }
.search-input { width: 106px; margin-left: 2px; }
.faded { opacity: .62; }
.faded2 { opacity: .55; }
.drop { width: 11px; height: 10px; position: relative; flex: none; }
.drop::before { content: ""; position: absolute; left: 2px; top: 3px; border: 3.500px solid transparent; border-top: 4px solid #111; border-bottom: 0; }
.pdf-mini { font: bold 5px "Liberation Sans", sans-serif; fill: #fff; text-anchor: middle; }
.pdf-tag { font: bold 6.500px "Liberation Sans", sans-serif; fill: #fff; text-anchor: middle; }
.ico-num { font: 9.500px "Liberation Sans", sans-serif; fill: #2f70c0; text-anchor: middle; }
.ico-t { font: 20px "Liberation Serif", serif; fill: #111; text-anchor: middle; }

/* ---------- tabs ---------- */
.tabstrip {
  height: 27px; flex: none; display: flex; align-items: flex-end; padding-left: 20px; position: relative;
  background: linear-gradient(#878787, #9b9b9b);
}
.tab { height: 24px; display: flex; align-items: center; flex: none; position: relative; white-space: nowrap; font-size: 11px; }
.tab-on {
  width: 186px; padding-left: 19px; background: linear-gradient(#f0f0f0, #e0e0e0); z-index: 1; font-size: 10.500px;
  clip-path: polygon(0 100%, 9px 6px, 13px 0, 172px 0, 176px 6px, 186px 100%);
}
.tab-off {
  width: 153px; margin-left: -1px; padding-left: 12px; background: linear-gradient(#b0b0b0, #a2a2a2); font-size: 11.300px;
  clip-path: polygon(0 100%, 5px 6px, 9px 0, 139px 0, 143px 6px, 153px 100%);
}
.tab-x { position: absolute; left: 166px; top: 12px; }
.tab-drop { position: absolute; left: 1245px; top: 13px; border: 5px solid transparent; border-top: 5px solid #111; border-bottom: 0; }

/* ---------- content ---------- */
.content { flex: 1; min-height: 0; display: flex; background: #bfbfbf; }
.sidebar { width: 248px; flex: none; display: flex; flex-direction: column; margin-top: 1px; }
.side-head {
  height: 23px; flex: none; display: flex; align-items: center; padding-left: 23px; position: relative;
  background: linear-gradient(#efefef, #cacaca); border-bottom: 1px solid #a8a8a8; margin-right: 4px;
}
.side-title { color: #555; font-size: 11.500px; }
.tri-left { position: absolute; left: 231px; top: 6px; border: 5px solid transparent; border-right: 6px solid #111; border-left: 0; }
.side-body { flex: 1; min-height: 0; display: flex; }
.rail { width: 33px; flex: none; background: #c9c9c9; border-right: 1px solid #bbb; }
.rail-item { height: 45px; display: flex; align-items: center; justify-content: center; }
.rail-on { background: #efefef; margin-left: 1px; margin-right: -1px; }
.thumbs { width: 196px; flex: none; background: #efefef; overflow: hidden; padding: 5px 0 0 22px; }
.thumb-wrap { width: 100px; height: 163px; position: relative; }
.thumb { width: 97px; height: 136px; background: #fff; border: 2px solid #c9c9c9; box-shadow: 3px 3px 0 #a9a9a9; }
.thumb-art { width: 93px; height: 132px; }
.thumb-no { width: 96px; text-align: center; margin-top: 3px; font: 13px/16px "Liberation Serif", serif; color: #111; }
.marker { position: absolute; left: 0; top: 31px; width: 95px; height: 102px; border: 2px solid #f00; }
.tl { stroke: #111; stroke-width: 1; fill: none; stroke-dasharray: 3 .4 1.500 .4 4 .5; }
.th { stroke: #111; stroke-width: 2; fill: none; }
.tc { stroke: #222; stroke-width: 1; fill: none; }
.tb-grid { stroke: #000; stroke-width: 1; fill: none; }
.tb-blk { stroke: #111; stroke-width: 10; stroke-dasharray: 6 1 4 1; fill: none; }

.sc { width: 15px; flex: none; position: relative; background: #efefef; border-left: 1px solid #e4e4e4; }
.ar-up, .ar-dn { position: absolute; left: 4px; border: 3.500px solid transparent; }
.ar-up { top: 8px; border-bottom: 4px solid #444; border-top: 0; }
.ar-dn { bottom: 7px; border-top: 4px solid #444; border-bottom: 0; }
.sc-thumb { position: absolute; left: 0; width: 14px; background: linear-gradient(90deg, #fafafa, #d4d4d4); border: 1px solid #b5b5b5; border-radius: 2px; }
.sc-thumb-side { top: 141px; height: 69px; display: flex; align-items: center; justify-content: center; }
.sc-thumb-side i { width: 7px; height: 7px; background: repeating-linear-gradient(#777 0 1px, #f2f2f2 1px 2px); }
.side-edge { width: 4px; flex: none; background: linear-gradient(90deg, #6e6e6e 1px, #d0d0d0 1px, #d0d0d0 3px, #8a8a8a 3px); }

.doc { flex: 1; min-width: 0; overflow: hidden; display: flex; flex-direction: column; align-items: flex-start; padding-left: 151px; background: #bfbfbf; border-left: 1px solid #adadad; }
.page {
  width: 695px; height: 759px; flex: none; margin-top: -10px; background: #fff; position: relative;
  border-right: 3px solid #000; border-bottom: 3px solid #000; border-left: 1px solid #8a8a8a;
  padding-left: 65px; font-family: "Liberation Serif", "Times New Roman", serif; color: #0d0d14;
}
.page-next { margin-top: 4px; height: 60px; border-bottom: 0; border-top: 1px solid #8a8a8a; }
.textblock { width: 559px; font-size: 16px; }
.ln { height: 22.500px; line-height: 22.500px; text-align: justify; text-align-last: justify; }
.ln-gap { margin-top: 2px; }
.ln-last { text-align-last: left; }
.ln-in { padding-left: 41px; }
.ln-right { text-align-last: right; }
.ln em { font-style: italic; }
.figures { position: absolute; left: -1px; top: 204px; }
.w path, .w rect, .w circle { fill: none; stroke: #1c1c1c; stroke-width: 1; }
.w .b { stroke-width: 1.600; fill: #fff; }
.w .b2 { stroke-width: 2; fill: none; stroke: #222; }
.w .bold { stroke-width: 1.300; }
.w .t { fill: #fff; stroke-width: 1; }
.s { font: 14px "Liberation Sans", sans-serif; fill: #111; }
.sub { font-size: 9.500px; }
.l { font: 16.500px "Liberation Sans", sans-serif; fill: #111; }
.sub2 { font-size: 12px; }
.cap-t { font: 16px "Liberation Serif", serif; fill: #0d0d14; text-anchor: middle; }
.num-t { font: 12.500px "Liberation Serif", serif; fill: #111; text-anchor: middle; }

.doc-sc { width: 16px; }
.sc-cap { position: absolute; left: -1px; right: 0; top: 0; height: 6px; background: #7d7d7d; }
.doc-sc .ar-up { top: 15px; }
.doc-sc .ar-dn { bottom: 7px; }
.sc-thumb-doc { left: 0; top: 179px; height: 15px; }

/* ---------- status ---------- */
.status {
  height: 33px; flex: none; display: flex; align-items: center; background: #d4d4d4;
  border-top: 1px solid #f2f2f2; padding: 0 0 0 497px; position: relative;
}
.st-btn { width: 24px; height: 20px; display: flex; align-items: center; justify-content: center; flex: none; }
.st-input { width: 115px; height: 19px; margin-left: 2px; background: #fff; border: 1px solid #bcd4ec; display: flex; justify-content: space-between; flex: none; }
.st-val { padding: 2px 0 0 3px; font: 11px/14px "Liberation Sans", sans-serif; letter-spacing: -.3px; }
.st-arrow { width: 10px; background: linear-gradient(#bcd6f0, #6f9cd0); position: relative; }
.st-arrow::before { content: ""; position: absolute; left: 2px; top: 7px; border: 3px solid transparent; border-top: 4px solid #111; border-bottom: 0; }
.st-down { margin-left: 2px; }
.st-end { margin-left: 2px; }
.st-back { margin-left: 1px; }
.st-fwd { margin-left: 3px; }
.st-view { width: 26px; height: 20px; display: flex; align-items: center; justify-content: center; flex: none; }
.st-v1 { margin-left: 151px; }
.st-on { width: 24px; height: 21px; background: linear-gradient(#fdb95e, #f29a34); border: 1px solid #54616e; }
.st-on + .st-view { margin-left: 1px; }
.zoom-val { margin-left: 16px; width: 56px; flex: none; font-size: 11px; color: #111; }
.drop-z { margin-left: 3px; width: 9px; }
.zoom-c { margin-left: 4px; flex: none; }
.slider { width: 89px; height: 2px; margin-left: 7px; margin-right: 4px; background: #b0b0b0; position: relative; flex: none; }
.slider i { position: absolute; left: 33px; top: -6px; width: 8px; height: 14px; background: linear-gradient(90deg, #fff, #cfcfcf); border: 1px solid #777; border-radius: 2px 2px 3px 3px; }
.st-grip { position: absolute; right: 2px; bottom: 2px; width: 8px; height: 8px; background: radial-gradient(circle, #9a9a9a 1px, transparent 1px) 0 0 / 3px 3px; }

/* ---------- taskbar ---------- */
.taskbar {
  height: 39px; flex: none; display: flex; align-items: stretch; position: relative; z-index: 2;
  background: linear-gradient(90deg, #90b0cf 0, #a9cbec 5%, #b8daf8 22%, #b4d6f6 50%, #a5c5e6 72%, #89a8c8 88%, #8aa8c6 100%);
  border-top: 1px solid #c7dced;
}
.tk-orb { width: 59px; padding: 0 0 0 8px; display: flex; align-items: center; }
.tk-btn {
  width: 59px; margin-right: 3px; display: flex; align-items: center; justify-content: center; flex: none;
  background: linear-gradient(rgba(255,255,255,.38), rgba(255,255,255,.12));
  border: 1px solid #5d7c9b; border-bottom: 0; border-radius: 3px 3px 0 0;
}
.tk-word { width: 55px; margin-right: 4px; }
.tk-pin { display: flex; align-items: center; justify-content: center; flex: none; }
.tk-pin-y { width: 64px; }
.tk-pin-c { width: 62px; margin-right: 1px; }
.word-w { font: bold 15px "Liberation Sans", sans-serif; fill: #1d4f9e; text-anchor: middle; }
.ya { font: bold 24px "Liberation Sans", sans-serif; fill: #f00; text-anchor: middle; }
.pdf-big { font: 10.500px "Liberation Mono", monospace; fill: #fff; text-anchor: middle; letter-spacing: 1px; }
.tray { margin-left: auto; width: 268px; position: relative; color: #eef3f8; flex: none; }
.tray > span, .tray > svg { position: absolute; }
.tray-desk { left: 0; top: 11px; font-size: 12px; white-space: nowrap; }
.tray-more { left: 82px; top: -1px; font-size: 14px; }
.tray-lang { left: 102px; top: 9px; font-size: 12px; }
.tray-up { left: 134px; top: 17px; border: 4px solid transparent; border-bottom: 5px solid #f2f6fa; border-top: 0; }
.tray-flag { left: 152px; top: 9px; }
.clock { left: 187px; top: 5px; width: 56px; display: flex; flex-direction: column; align-items: center; line-height: 16px; font-size: 12px; white-space: nowrap; letter-spacing: -.3px; }
.show-desk { right: 0; top: 0; width: 10px; height: 39px; background: linear-gradient(90deg, #7f9dbb, #a7c2dc); border-left: 1px solid #d5e3ef; }
```
